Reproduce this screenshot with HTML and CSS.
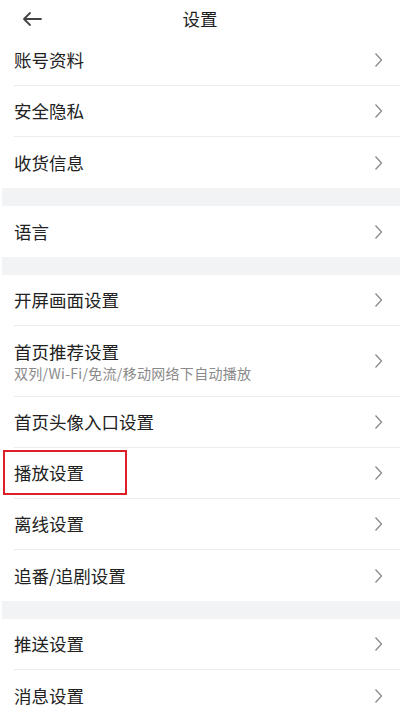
FILE: index.html
```html
<!DOCTYPE html>
<html lang="zh-CN">
<head>
<meta charset="utf-8">
<title>设置</title>
<link rel="stylesheet" href="styles.css">
</head>
<body>
<div class="page">
  <header class="topbar">
    <svg class="back" width="22" height="16" viewBox="0 0 22 16"><path d="M20 8H3M9 2L3 8l6 6" fill="none" stroke="#444" stroke-width="1.8" stroke-linecap="round" stroke-linejoin="round"/></svg>
    <div class="title">设置</div>
  </header>

  <section class="group">
    <div class="row"><span class="label">账号资料</span><svg class="chev" viewBox="0 0 9 16"><path d="M1.5 1.5L7.5 8l-6 6.5" fill="none" stroke="#8a8a8a" stroke-width="1.3"/></svg></div>
    <div class="row"><span class="label">安全隐私</span><svg class="chev" viewBox="0 0 9 16"><path d="M1.5 1.5L7.5 8l-6 6.5" fill="none" stroke="#8a8a8a" stroke-width="1.3"/></svg></div>
    <div class="row"><span class="label">收货信息</span><svg class="chev" viewBox="0 0 9 16"><path d="M1.5 1.5L7.5 8l-6 6.5" fill="none" stroke="#8a8a8a" stroke-width="1.3"/></svg></div>
  </section>
  <div class="gap"></div>
  <section class="group">
    <div class="row"><span class="label">语言</span><svg class="chev" viewBox="0 0 9 16"><path d="M1.5 1.5L7.5 8l-6 6.5" fill="none" stroke="#8a8a8a" stroke-width="1.3"/></svg></div>
  </section>
  <div class="gap"></div>
  <section class="group">
    <div class="row"><span class="label">开屏画面设置</span><svg class="chev" viewBox="0 0 9 16"><path d="M1.5 1.5L7.5 8l-6 6.5" fill="none" stroke="#8a8a8a" stroke-width="1.3"/></svg></div>
    <div class="row tall"><div class="texts"><span class="label">首页推荐设置</span><span class="sub">双列/Wi-Fi/免流/移动网络下自动播放</span></div><svg class="chev" viewBox="0 0 9 16"><path d="M1.5 1.5L7.5 8l-6 6.5" fill="none" stroke="#8a8a8a" stroke-width="1.3"/></svg></div>
    <div class="row"><span class="label">首页头像入口设置</span><svg class="chev" viewBox="0 0 9 16"><path d="M1.5 1.5L7.5 8l-6 6.5" fill="none" stroke="#8a8a8a" stroke-width="1.3"/></svg></div>
    <div class="row"><span class="label">播放设置</span><svg class="chev" viewBox="0 0 9 16"><path d="M1.5 1.5L7.5 8l-6 6.5" fill="none" stroke="#8a8a8a" stroke-width="1.3"/></svg><div class="highlight"></div></div>
    <div class="row"><span class="label">离线设置</span><svg class="chev" viewBox="0 0 9 16"><path d="M1.5 1.5L7.5 8l-6 6.5" fill="none" stroke="#8a8a8a" stroke-width="1.3"/></svg></div>
    <div class="row"><span class="label">追番/追剧设置</span><svg class="chev" viewBox="0 0 9 16"><path d="M1.5 1.5L7.5 8l-6 6.5" fill="none" stroke="#8a8a8a" stroke-width="1.3"/></svg></div>
  </section>
  <div class="gap"></div>
  <section class="group">
    <div class="row"><span class="label">推送设置</span><svg class="chev" viewBox="0 0 9 16"><path d="M1.5 1.5L7.5 8l-6 6.5" fill="none" stroke="#8a8a8a" stroke-width="1.3"/></svg></div>
    <div class="row"><span class="label">消息设置</span><svg class="chev" viewBox="0 0 9 16"><path d="M1.5 1.5L7.5 8l-6 6.5" fill="none" stroke="#8a8a8a" stroke-width="1.3"/></svg></div>
  </section>
</div>
</body>
</html>
```
FILE: styles.css
```css
* { box-sizing: border-box; }
html, body {
  margin: 0;
  padding: 0;
  background: #ffffff;
}
body {
  font-family: "Noto Sans CJK SC", "Noto Sans", sans-serif;
  color: #222222;
  width: 400px;
  height: 715px;
  overflow: hidden;
}
.page {
  display: flex;
  flex-direction: column;
}
.topbar {
  position: relative;
  height: 35px;
  display: flex;
  align-items: center;
  justify-content: center;
}
.back {
  position: absolute;
  left: 21px;
  top: 11px;
}
.title {
  font-size: 17.5px;
  line-height: 1;
  color: #1e1e1e;
  margin-top: 3px;
}
.group {
  display: flex;
  flex-direction: column;
  padding-left: 14px;
}
.row {
  position: relative;
  height: 51px;
  display: flex;
  align-items: center;
  justify-content: space-between;
  border-bottom: 1px solid #ececee;
  padding-right: 17px;
}
.row:last-child {
  border-bottom: none;
}
.row.tall {
  height: 71px;
}
.label {
  font-size: 17.5px;
  line-height: 1;
  color: #222222;
}
.texts {
  display: flex;
  flex-direction: column;
  gap: 6px;
  padding-top: 1px;
}
.sub {
  font-size: 14px;
  letter-spacing: 0.3px;
  line-height: 1;
  color: #8a8a8a;
}
.chev {
  width: 9px;
  height: 16px;
  flex: none;
}
.gap {
  height: 18px;
  margin-left: 2px;
  background: #f2f3f5;
}
.highlight {
  position: absolute;
  left: -11px;
  top: 2px;
  width: 124px;
  height: 45px;
  border: 2px solid #dd1f2a;
  pointer-events: none;
}
```
